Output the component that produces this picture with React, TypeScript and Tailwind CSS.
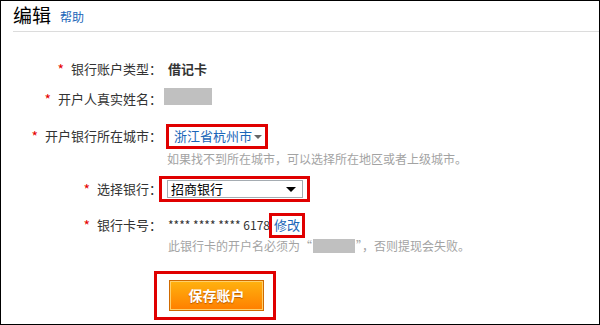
import { useState } from 'react'

const font = { fontFamily: '"Noto Sans CJK SC", "Liberation Sans", sans-serif' }

function Label({ text }: { text: string }) {
  return (
    <div className="flex w-[161px] shrink-0 items-center justify-end text-[13px] text-[#333]">
      <span className="mr-[7px] text-[14px] text-[#e60000]">*</span>
      <span>{text}：</span>
    </div>
  )
}

export default function App() {
  const [bank] = useState('招商银行')

  return (
    <div
      className="h-[325px] w-[600px] overflow-hidden border border-black bg-white"
      style={font}
    >
      <div className="ml-[12px] flex h-[31px] items-end border-b border-[#dcdcdc] pb-[4px]">
        <h1 className="text-[19px] leading-[24px] text-black">编辑</h1>
        <a href="#" className="mb-[3px] ml-[9px] text-[12px] leading-[14px] text-[#1a66b8]">
          帮助
        </a>
      </div>

      <div className="flex flex-col">
        {/* 账户类型 */}
        <div className="mt-[23px] flex h-[28px] items-center">
          <Label text="银行账户类型" />
          <span className="ml-[6px] text-[13px] font-bold text-[#333]">借记卡</span>
        </div>

        {/* 真实姓名 */}
        <div className="mt-[2px] flex h-[28px] items-center">
          <Label text="开户人真实姓名" />
          <span className="ml-[2px] mt-[-6px] h-[17px] w-[48px] bg-[#c0c0c0]" />
        </div>

        {/* 城市 */}
        <div className="mt-[9px] flex h-[28px] items-center">
          <Label text="开户银行所在城市" />
          <div className="ml-[4px] flex h-[25px] w-[102px] items-center border-[3px] border-[#e00000] pl-[5px]">
            <span className="text-[13px] text-[#1a66b8]">浙江省杭州市</span>
            <span className="ml-[2px] mt-[1px] h-0 w-0 border-x-[4px] border-t-[4px] border-x-transparent border-t-[#666]" />
          </div>
        </div>
        <div className="ml-[166px] mt-[1px] text-[12px] leading-[16px] text-[#a3a3a3]">
          如果找不到所在城市，可以选择所在地区或者上级城市。
        </div>

        {/* 选择银行 */}
        <div className="mt-[8px] flex h-[28px] items-center">
          <Label text="选择银行" />
          <div className="ml-[-3px] flex h-[26px] w-[151px] items-center border-[3px] border-[#e00000] pl-[5px] pr-[4px]">
            <div className="flex h-[18px] w-full items-center justify-between border border-[#a5acb2] bg-white pl-[3px] pr-[6px]">
              <span className="text-[13px] leading-[16px] text-black">{bank}</span>
              <span className="h-0 w-0 border-x-[5px] border-t-[5px] border-x-transparent border-t-black" />
            </div>
          </div>
        </div>

        {/* 卡号 */}
        <div className="mt-[8px] flex h-[28px] items-center">
          <Label text="银行卡号" />
          <span className="ml-[6px] text-[12px] text-[#333]">**** **** **** 6178</span>
          <div className="ml-[-1px] flex h-[25px] items-center border-[3px] border-[#e00000] px-[2px]">
            <a href="#" className="text-[13px] leading-[16px] text-[#1a66b8]">
              修改
            </a>
          </div>
        </div>
        <div className="ml-[167px] mt-[-1px] flex items-center text-[12px] leading-[16px] text-[#a3a3a3]">
          <span>此银行卡的开户名必须为“</span>
          <span className="mx-[1px] h-[14px] w-[42px] bg-[#c0c0c0]" />
          <span>”，否则提现会失败。</span>
        </div>

        {/* 保存 */}
        <div className="ml-[153px] mt-[17px] flex h-[49px] w-[122px] items-center border-[3px] border-[#e00000] pl-[12px]">
          <button
            type="button"
            className="flex h-[31px] w-[95px] items-center justify-center border border-[#d06a00] bg-gradient-to-b from-[#ffb20f] to-[#ff7e00] text-[14px] font-bold text-white shadow-[inset_0_0_0_1px_#ffcf6a]"
            style={{ textShadow: '0 1px 1px #b75800' }}
          >
            保存账户
          </button>
        </div>
      </div>
    </div>
  )
}
